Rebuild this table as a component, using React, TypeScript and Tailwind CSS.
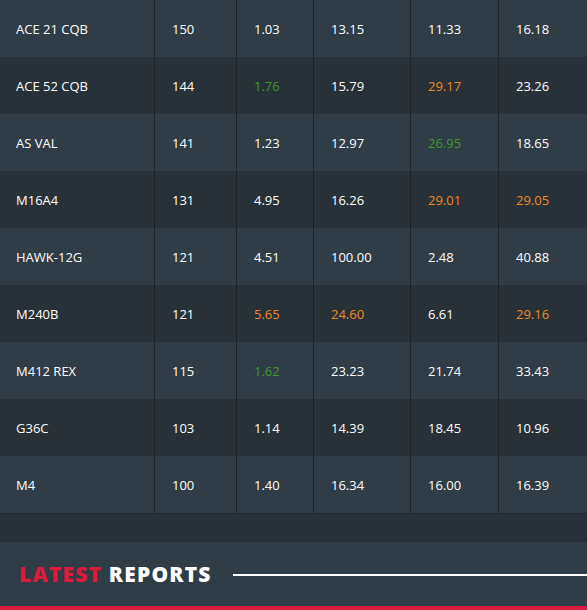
const rows: [string, string, [string, string][]][] = [
  ["ACE 21 CQB", "150", [["1.03", ""], ["13.15", ""], ["11.33", ""], ["16.18", ""]]],
  ["ACE 52 CQB", "144", [["1.76", "g"], ["15.79", ""], ["29.17", "o"], ["23.26", ""]]],
  ["AS VAL", "141", [["1.23", ""], ["12.97", ""], ["26.95", "g"], ["18.65", ""]]],
  ["M16A4", "131", [["4.95", ""], ["16.26", ""], ["29.01", "o"], ["29.05", "o"]]],
  ["HAWK-12G", "121", [["4.51", ""], ["100.00", ""], ["2.48", ""], ["40.88", ""]]],
  ["M240B", "121", [["5.65", "o"], ["24.60", "o"], ["6.61", ""], ["29.16", "o"]]],
  ["M412 REX", "115", [["1.62", "g"], ["23.23", ""], ["21.74", ""], ["33.43", ""]]],
  ["G36C", "103", [["1.14", ""], ["14.39", ""], ["18.45", ""], ["10.96", ""]]],
  ["M4", "100", [["1.40", ""], ["16.34", ""], ["16.00", ""], ["16.39", ""]]],
];

function tone(t: string) {
  if (t === "g") return "text-[#3f9a2c]";
  if (t === "o") return "text-[#ef8a25]";
  return "text-white";
}

export default function App() {
  return (
    <div className="w-[587px] h-[610px] overflow-hidden bg-[#273137] font-['Open_Sans',sans-serif]">
      <div className="border-b border-[#1f272c]">
        {rows.map(([name, score, vals], i) => (
          <div
            key={name}
            className={`grid grid-cols-[154px_82px_77px_97px_88px_1fr] h-[57px] text-[13px] ${
              i % 2 === 0 ? "bg-[#303c46]" : "bg-[#273137]"
            }`}
          >
            <div className="flex items-center pl-4 pt-[2px] text-white">{name}</div>
            <div className="flex items-center pl-[17px] pt-[2px] border-l border-[#1c2328] text-white">{score}</div>
            {vals.map(([v, t], j) => (
              <div key={j} className={`flex items-center pl-[17px] pt-[2px] border-l border-[#1c2328] ${tone(t)}`}>
                {v}
              </div>
            ))}
          </div>
        ))}
      </div>
      <div className="h-[28px] bg-[#273137]" />
      <div className="h-[64px] bg-[#303c46] flex items-center pl-[19px] pt-[1px]">
        <h2 className="font-['Open_Sans',sans-serif] font-extrabold text-[21px] tracking-[1.2px] uppercase whitespace-nowrap">
          <span className="text-[#dc1a3c]">Latest</span> <span className="text-white">Reports</span>
        </h2>
        <div className="ml-[21px] flex-1 h-[2px] bg-white" />
      </div>
      <div className="h-[4px] bg-[#dc1a3c]" />
    </div>
  );
}
